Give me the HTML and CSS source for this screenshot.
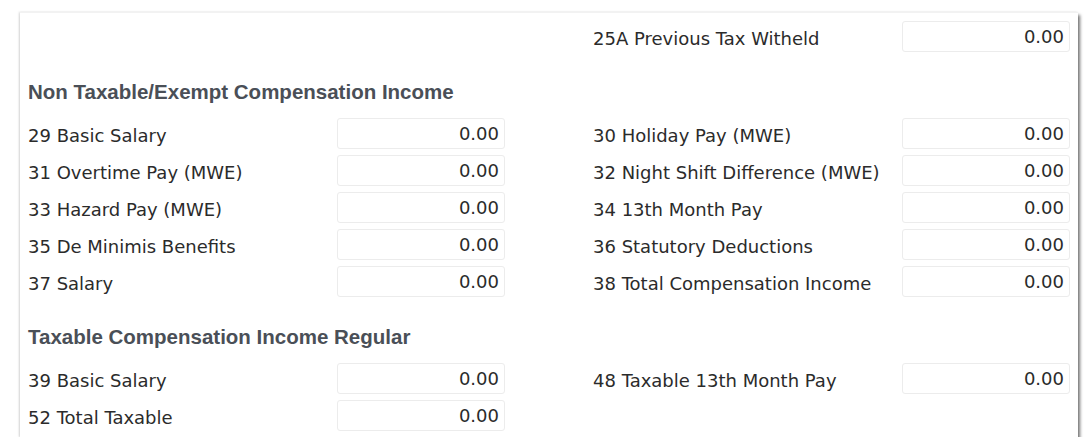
FILE: index.html
```html
<!DOCTYPE html>
<html>
<head>
<meta charset="utf-8">
<link rel="stylesheet" href="styles.css">
</head>
<body>
<div class="card">
  <div class="grid">
    <div class="field empty"></div>
    <div class="field"><span class="label">25A Previous Tax Witheld</span><span class="input">0.00</span></div>
  </div>
  <h3 class="heading">Non Taxable/Exempt Compensation Income</h3>
  <div class="grid">
    <div class="field"><span class="label">29 Basic Salary</span><span class="input">0.00</span></div>
    <div class="field"><span class="label">30 Holiday Pay (MWE)</span><span class="input">0.00</span></div>
    <div class="field"><span class="label">31 Overtime Pay (MWE)</span><span class="input">0.00</span></div>
    <div class="field"><span class="label">32 Night Shift Difference (MWE)</span><span class="input">0.00</span></div>
    <div class="field"><span class="label">33 Hazard Pay (MWE)</span><span class="input">0.00</span></div>
    <div class="field"><span class="label">34 13th Month Pay</span><span class="input">0.00</span></div>
    <div class="field"><span class="label">35 De Minimis Benefits</span><span class="input">0.00</span></div>
    <div class="field"><span class="label">36 Statutory Deductions</span><span class="input">0.00</span></div>
    <div class="field"><span class="label">37 Salary</span><span class="input">0.00</span></div>
    <div class="field"><span class="label">38 Total Compensation Income</span><span class="input">0.00</span></div>
  </div>
  <h3 class="heading">Taxable Compensation Income Regular</h3>
  <div class="grid">
    <div class="field"><span class="label">39 Basic Salary</span><span class="input">0.00</span></div>
    <div class="field"><span class="label">48 Taxable 13th Month Pay</span><span class="input">0.00</span></div>
    <div class="field"><span class="label">52 Total Taxable</span><span class="input">0.00</span></div>
    <div class="field empty"></div>
  </div>
</div>
</body>
</html>
```

FILE: styles.css
```css
html, body {
  margin: 0;
  padding: 0;
  background: #ffffff;
}
body {
  padding: 12px 10px 0 20px;
  font-family: "DejaVu Sans", Verdana, sans-serif;
  color: #2b2b2b;
}
.card {
  width: 1058px;
  height: 425px;
  box-sizing: border-box;
  background: #ffffff;
  border-top: 1px solid #f2f2f2;
  box-shadow: 2px 3px 3px rgba(0, 0, 0, 0.55), -1px 0 2px rgba(0, 0, 0, 0.15);
  padding: 8px 9px 0 8px;
}
.grid {
  display: grid;
  grid-template-columns: 477px 477px;
  column-gap: 88px;
  row-gap: 6px;
}
.field {
  display: flex;
  align-items: center;
  height: 31px;
}
.label {
  flex: 1;
  font-size: 18px;
  line-height: 31px;
  padding-top: 3px;
  color: #2b2b2b;
  white-space: nowrap;
}
.input {
  width: 168px;
  height: 31px;
  box-sizing: border-box;
  border: 1px solid #ececec;
  border-radius: 3px;
  text-align: right;
  padding-right: 5px;
  font-size: 18px;
  line-height: 29px;
  color: #2b2b2b;
}
.heading {
  margin: 0;
  height: 66px;
  box-sizing: border-box;
  padding-top: 28px;
  font-family: "Liberation Sans", Arial, sans-serif;
  font-weight: bold;
  font-size: 20.5px;
  color: #4a4f57;
}
```
